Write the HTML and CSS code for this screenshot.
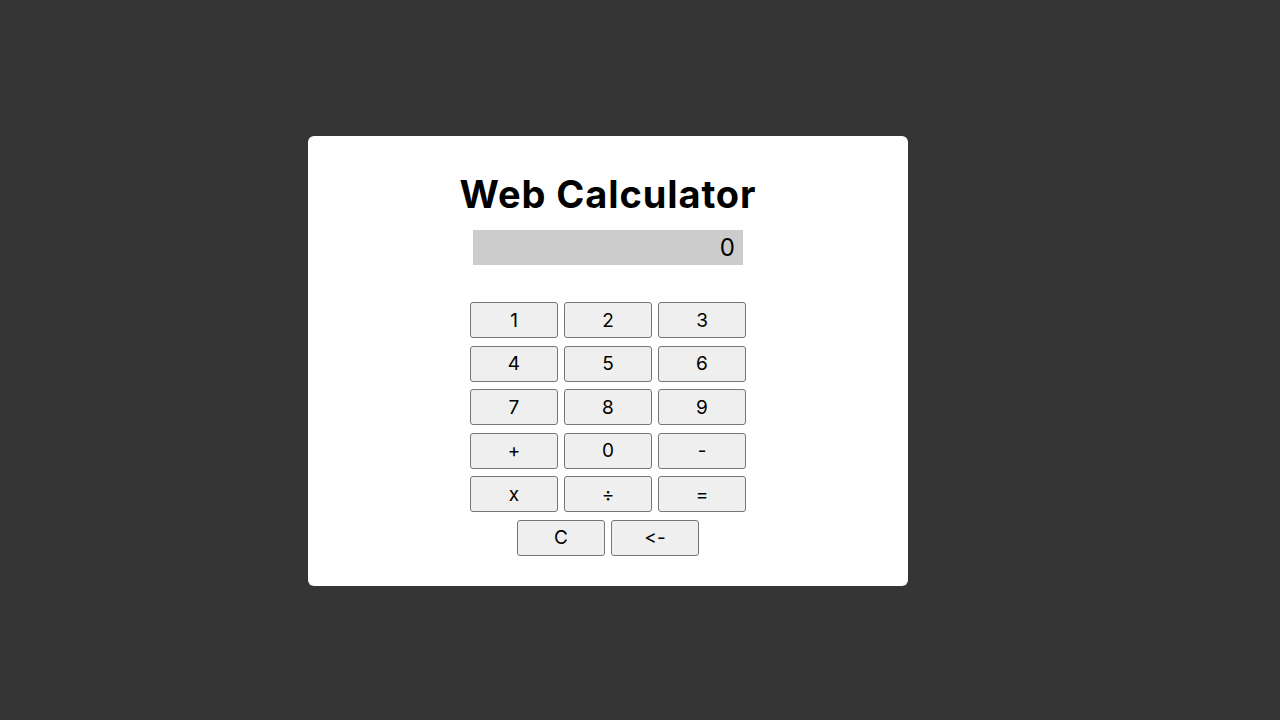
FILE: index.html
```html
<!DOCTYPE html>
<html lang="en">
<head>
<meta charset="utf-8">
<title>Web Calculator</title>
<link rel="stylesheet" href="styles.css">
</head>
<body>
<main class="calculator">
  <h1 class="title">Web Calculator</h1>
  <div class="display">0</div>
  <div class="keys">
    <button class="key">1</button>
    <button class="key">2</button>
    <button class="key">3</button>
    <button class="key">4</button>
    <button class="key">5</button>
    <button class="key">6</button>
    <button class="key">7</button>
    <button class="key">8</button>
    <button class="key">9</button>
    <button class="key">+</button>
    <button class="key">0</button>
    <button class="key">-</button>
    <button class="key">x</button>
    <button class="key">÷</button>
    <button class="key">=</button>
  </div>
  <div class="keys-last">
    <button class="key">C</button>
    <button class="key">&lt;-</button>
  </div>
</main>
</body>
</html>
```

FILE: styles.css
```css
html, body {
  margin: 0;
  height: 100%;
}
body {
  box-sizing: border-box;
  background: #353535;
  display: flex;
  align-items: center;
  justify-content: center;
  padding: 2px 64px 0 0;
  font-family: Inter, "Open Sans", sans-serif;
  font-feature-settings: "calt" 0, "liga" 0;
  font-variant-ligatures: none;
}
.calculator {
  width: 600px;
  height: 450px;
  box-sizing: border-box;
  background: #ffffff;
  border-radius: 6px;
  padding-top: 35px;
  display: flex;
  flex-direction: column;
  align-items: center;
}
.title {
  margin: 0;
  font-size: 38px;
  line-height: 46px;
  font-weight: 700;
  letter-spacing: 0.9px;
  color: #000;
}
.display {
  margin-top: 13px;
  width: 270px;
  height: 35px;
  box-sizing: border-box;
  background: #cccccc;
  padding-right: 8px;
  text-align: right;
  font-size: 24px;
  line-height: 35px;
  color: #000;
}
.keys {
  margin-top: 37px;
  display: grid;
  grid-template-columns: repeat(3, 88px);
  column-gap: 6px;
  row-gap: 7.6px;
}
.keys-last {
  margin-top: 7.6px;
  display: flex;
  gap: 6px;
}
.key {
  width: 88px;
  height: 36px;
  box-sizing: border-box;
  background: #efefef;
  border: 1px solid #767676;
  border-radius: 3px;
  font-family: inherit;
  font-feature-settings: "calt" 0, "liga" 0;
  font-variant-ligatures: none;
  font-size: 19px;
  color: #000;
  padding: 0;
}
```
